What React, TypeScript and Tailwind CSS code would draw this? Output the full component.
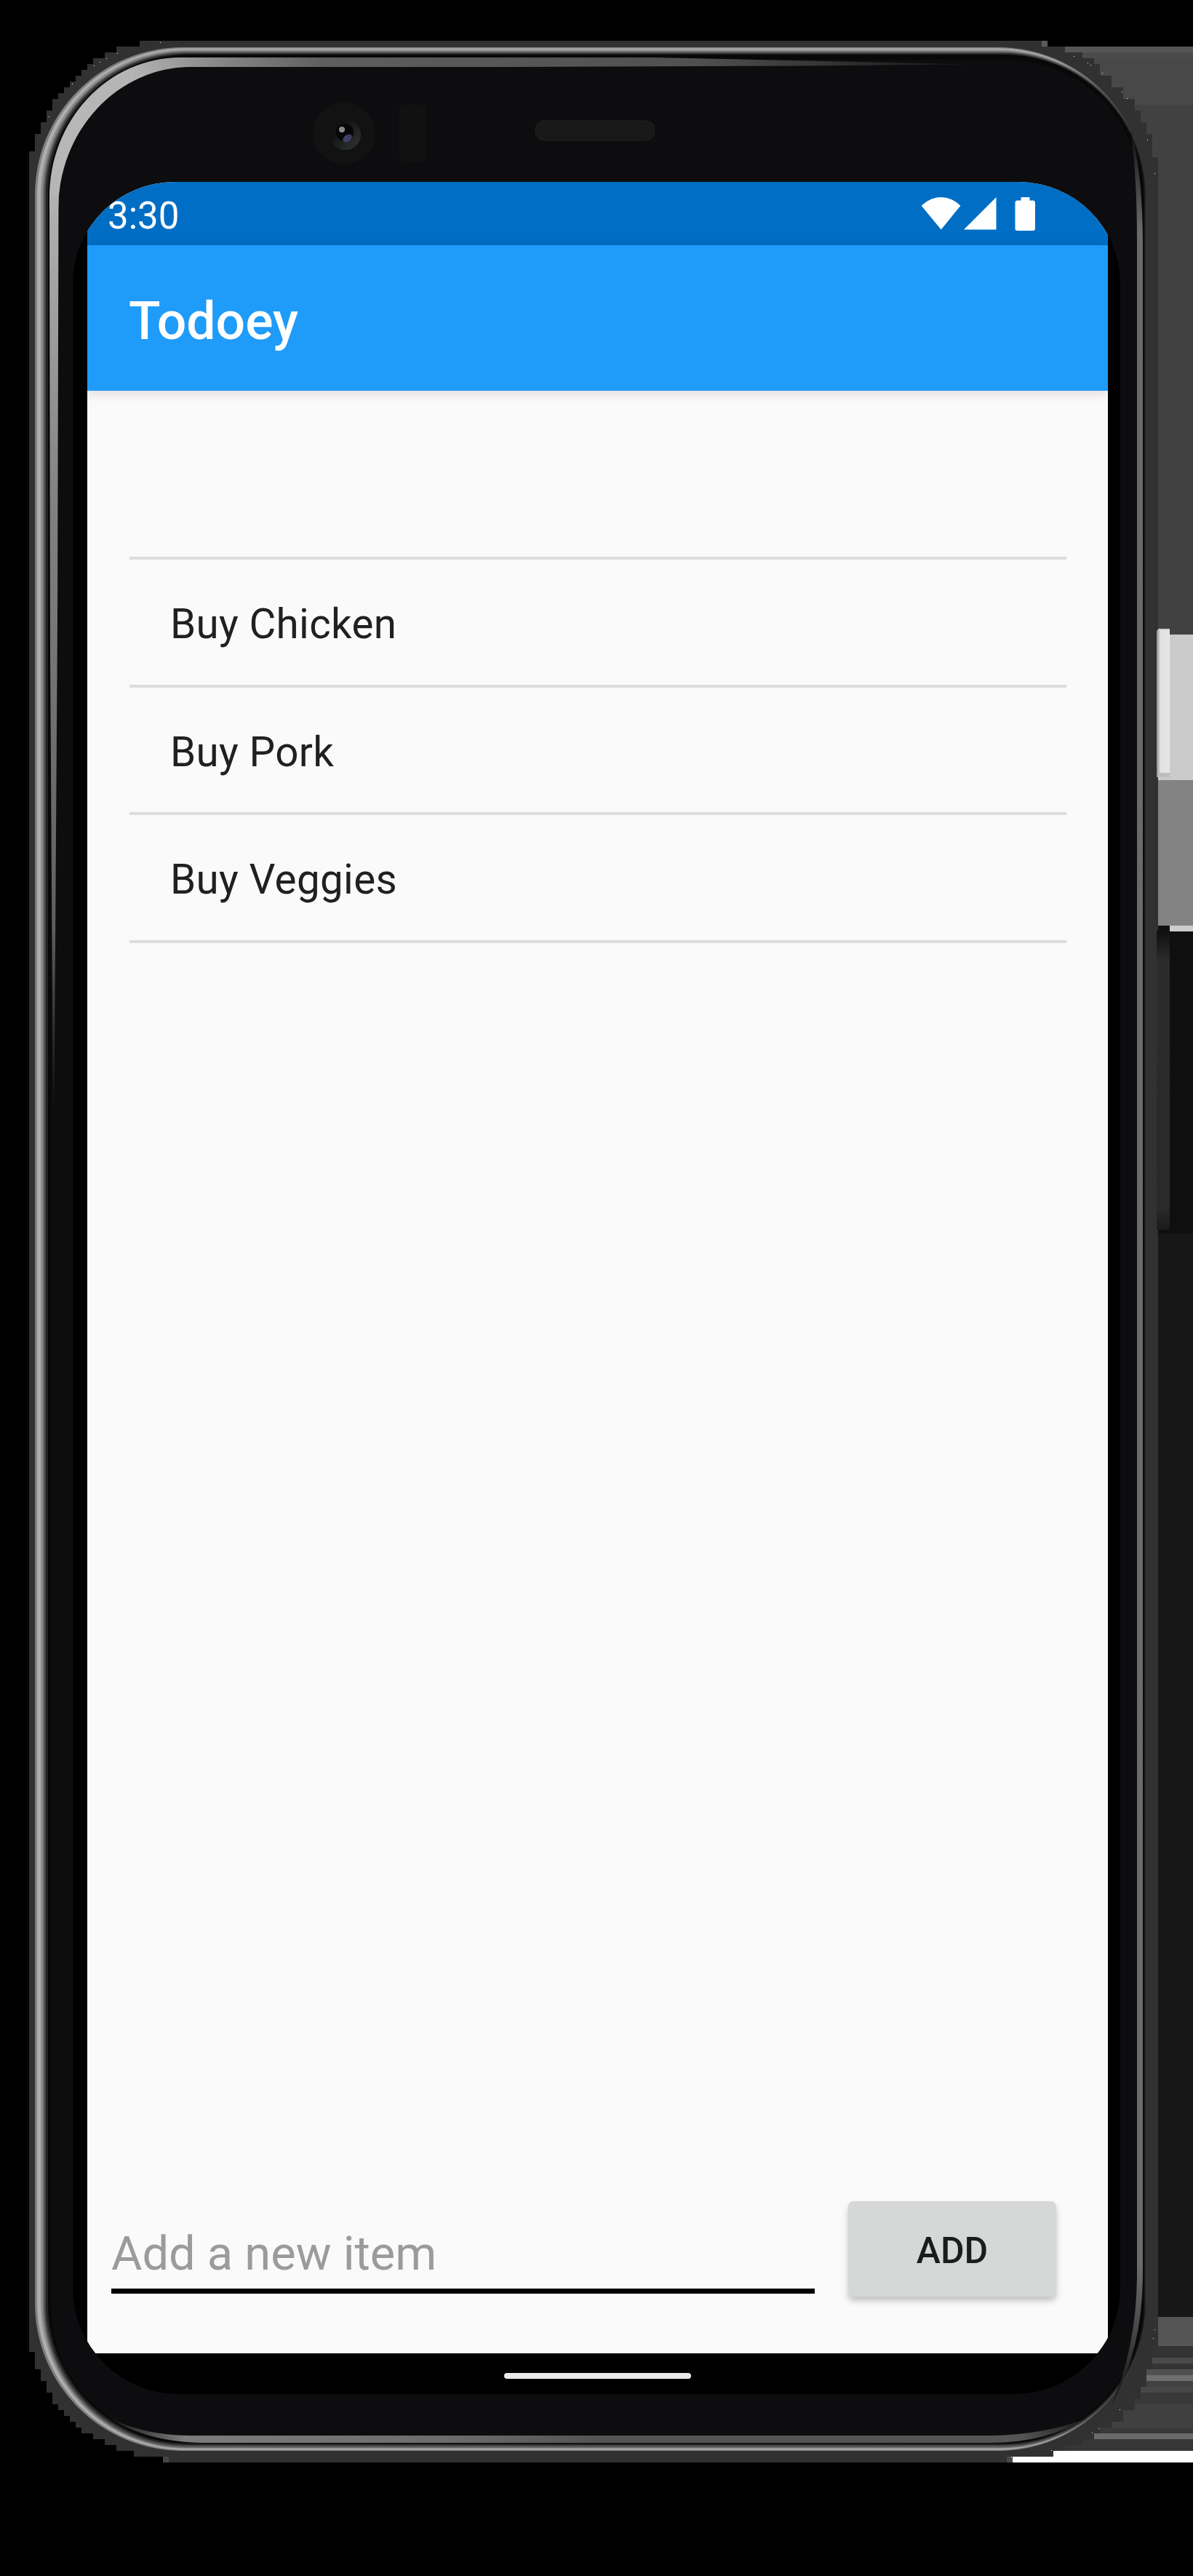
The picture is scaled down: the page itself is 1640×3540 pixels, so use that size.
import React, { useState } from "react";

type Step = [number, number];

/** Rounded rectangle outline from its four edges and corner radius. */
function shape(l: number, t: number, r: number, b: number, c: number) {
  return `M${l + c} ${t}H${r - c}A${c} ${c} 0 0 1 ${r} ${t + c}V${b - c}A${c} ${c} 0 0 1 ${r - c} ${b}H${l + c}A${c} ${c} 0 0 1 ${l} ${b - c}V${t + c}A${c} ${c} 0 0 1 ${l + c} ${t}Z`;
}

/** Each layer of the metal rim: left, top, right, bottom, radius, left colour, right colour. */
const rim: [number, number, number, number, number, string, string][] = [
  [48, 65, 1575, 3368, 203, "#808080", "#2a2a2a"],
  [51, 66.5, 1574.5, 3366.5, 202, "#aeaeae", "#242424"],
  [56, 68.5, 1574, 3365, 199, "#8d8d8d", "#1c1c1c"],
  [59, 70.5, 1573.5, 3364, 197, "#676767", "#161616"],
  [61, 72, 1573, 3362, 195, "#454545", "#101010"],
  [63, 73.5, 1572.5, 3360, 194, "#232323", "#0c0c0c"],
  [66, 75, 1572, 3358, 192, "#080808", "#080808"],
];

const topLeft: Step[] = [
  [40, 208], [48, 184], [56, 168], [64, 152], [72, 136], [80, 128], [88, 120], [96, 112],
  [104, 104], [112, 96], [120, 88], [128, 80], [144, 72], [160, 64], [192, 56],
];
const topRight: Step[] = [
  [1440, 64], [1464, 72], [1488, 80], [1504, 88], [1512, 104], [1528, 120], [1544, 136],
  [1560, 152], [1568, 168], [1576, 184], [1584, 216], [1592, 232],
];
const bottomRight: Step[] = [
  [1592, 3224], [1584, 3256], [1576, 3280], [1568, 3296], [1560, 3312], [1544, 3328],
  [1528, 3336], [1512, 3344], [1504, 3352], [1488, 3360], [1464, 3368], [1448, 3376], [1392, 3384],
];
const bottomLeft: Step[] = [
  [224, 3376], [184, 3368], [160, 3360], [144, 3352], [128, 3344], [112, 3336], [104, 3328],
  [96, 3320], [88, 3312], [80, 3304], [72, 3288], [64, 3272], [56, 3256], [48, 3232], [40, 3200],
];

/** Stair-stepped silhouette around the phone. */
const halo =
  "M40 208" +
  topLeft.map(([x, y]) => `H${x}V${y}`).join("") +
  topRight.map(([x, y]) => `H${x}V${y}`).join("") +
  bottomRight.map(([x, y]) => `H${x}V${y}`).join("") +
  bottomLeft.map(([x, y]) => `H${x}V${y}`).join("") +
  "Z";

/** Horizontal bands on the right edge: x, y, height, colour. */
const bands: [number, number, number, string][] = [
  [1440, 64, 8, "#555555"],
  [1440, 72, 8, "#4b4b4b"],
  [1440, 80, 64, "#484848"],
  [1500, 144, 728, "#414141"],
  [1592, 872, 200, "#cbcbcb"],
  [1592, 1072, 200, "#838383"],
  [1608, 1272, 8, "#cccccc"],
  [1592, 1280, 416, "#0f0f0f"],
  [1592, 1696, 1488, "#171717"],
  [1592, 3184, 40, "#555555"],
  [1576, 3224, 16, "#333333"],
  [1584, 3240, 8, "#4a4a4a"],
  [1560, 3248, 8, "#343434"],
  [1576, 3256, 8, "#515151"],
  [1576, 3264, 8, "#6e6e6e"],
  [1560, 3272, 8, "#414141"],
  [1568, 3280, 8, "#474747"],
  [1500, 3288, 16, "#393939"],
  [1500, 3304, 32, "#404040"],
  [1500, 3336, 8, "#393939"],
  [1504, 3344, 8, "#6a6a6a"],
  [1448, 3352, 16, "#363636"],
  [1392, 3368, 16, "#ffffff"],
];

const specks: Step[] = [
  [220, 58], [161, 73], [146, 80], [137, 85], [129, 90], [99, 115], [67, 160], [1476, 77], [1495, 86], [1499, 89],
  [1515, 100], [1542, 126], [1549, 135], [1577, 192], [1587, 238], [1587, 3201], [1585, 3213],
  [1539, 3311], [1510, 3337], [1501, 3343], [1445, 3367], [1390, 3376],
];

function DeviceArt() {
  return (
    <svg className="absolute inset-0" width="1640" height="3540" viewBox="0 0 1640 3540" aria-hidden="true">
      <defs>
        {rim.map(([, , , , , a, b], i) => (
          <linearGradient key={i} id={`rim${i}`} gradientUnits="userSpaceOnUse" x1="1450" y1="0" x2="1574" y2="0">
            <stop offset="0" stopColor={a} />
            <stop offset="1" stopColor={b} />
          </linearGradient>
        ))}
        <radialGradient id="shine" gradientUnits="userSpaceOnUse" cx="0" cy="0" r="1" gradientTransform="translate(80 180) scale(1260 1320)">
          <stop offset="0" stopColor="#b8b8b8" />
          <stop offset="0.1" stopColor="#b4b4b4" />
          <stop offset="0.2" stopColor="#828282" />
          <stop offset="0.3" stopColor="#5e5e5e" />
          <stop offset="0.7" stopColor="#505050" />
          <stop offset="1" stopColor="#141414" />
        </radialGradient>
        <linearGradient id="leftShine" gradientUnits="userSpaceOnUse" x1="0" y1="270" x2="0" y2="1520">
          <stop offset="0" stopColor="#b2b2b2" />
          <stop offset="0.35" stopColor="#808080" />
          <stop offset="0.8" stopColor="#606060" />
          <stop offset="1" stopColor="#101010" />
        </linearGradient>
        <linearGradient id="rightShine" gradientUnits="userSpaceOnUse" x1="0" y1="190" x2="0" y2="3300">
          <stop offset="0" stopColor="#151515" />
          <stop offset="0.04" stopColor="#6a6a6a" />
          <stop offset="0.94" stopColor="#6c6c6c" />
          <stop offset="0.97" stopColor="#454545" />
          <stop offset="1" stopColor="#111111" />
        </linearGradient>
        <linearGradient id="bottomShine" gradientUnits="userSpaceOnUse" x1="145" y1="0" x2="1500" y2="0">
          <stop offset="0" stopColor="#111111" />
          <stop offset="0.08" stopColor="#7c7c7c" />
          <stop offset="0.35" stopColor="#6c6c6c" />
          <stop offset="0.5" stopColor="#545454" />
          <stop offset="0.93" stopColor="#555555" />
          <stop offset="1" stopColor="#151515" />
        </linearGradient>
        <linearGradient id="power" x1="0" y1="0" x2="1" y2="0">
          <stop offset="0" stopColor="#8c8c8c" />
          <stop offset="0.12" stopColor="#b0b0b0" />
          <stop offset="0.3" stopColor="#e3e3e3" />
          <stop offset="1" stopColor="#e6e6e6" />
        </linearGradient>
        <linearGradient id="volume" x1="0" y1="0" x2="0" y2="1">
          <stop offset="0" stopColor="#101010" />
          <stop offset="0.1" stopColor="#2b2b2b" />
          <stop offset="0.93" stopColor="#2a2a2a" />
          <stop offset="1" stopColor="#1a1a1a" />
        </linearGradient>
        <linearGradient id="lens" x1="0.15" y1="0.15" x2="0.85" y2="0.85">
          <stop offset="0.2" stopColor="#121212" />
          <stop offset="0.6" stopColor="#1e2022" />
          <stop offset="1" stopColor="#2c2f2f" />
        </linearGradient>
        <pattern id="mesh" width="4" height="4" patternUnits="userSpaceOnUse">
          <rect width="4" height="4" fill="#111111" />
          <rect width="2" height="2" fill="#202020" />
          <rect x="2" y="2" width="2" height="2" fill="#202020" />
        </pattern>
      </defs>

      {bands.map(([x, y, h, fill]) => (
        <rect key={`${x}-${y}`} x={x} y={y} width={1640 - x} height={h} fill={fill} />
      ))}
      <path d={halo} fill="#313131" />
      <rect x="1432" y="56" width="8" height="8" fill="#5a5a5a" />
      <rect x="1384" y="3376" width="8" height="8" fill="#4a4a4a" />
      <rect x="224" y="3376" width="8" height="8" fill="#464646" />
      <rect x="1592" y="864" width="16" height="8" fill="#cfcfcf" />
      <rect x="1590" y="866" width="18" height="202" fill="url(#power)" />
      <rect x="1592" y="1062" width="16" height="6" fill="#bdbdbd" />
      <rect x="1592" y="1272" width="16" height="8" fill="#101010" />
      <rect x="1590" y="1279" width="18" height="411" fill="url(#volume)" />
      {specks.map(([x, y]) => (
        <rect key={`${x}-${y}`} x={x} y={y} width="1" height="1" fill="#ffffff" />
      ))}

      {rim.map(([l, t, r, b, c], i) => (
        <path key={i} d={shape(l, t, r, b, c)} fill={`url(#rim${i})`} />
      ))}
      <path d={shape(70, 82, 1568, 3354, 184)} fill="#0d0d0f" />
      <path
        d="M68 270A180 191 0 0 1 248 79H900L1340 88.5L1100 90.500L700 92H262A182 196 0 0 0 80 288V270Z"
        fill="url(#shine)"
      />
      <path d="M68 268H80.500L79 850L74.500 1520H73L69 900Z" fill="url(#leftShine)" />
      <path
        d="M1554 178Q1570 230 1571 330V3130Q1570 3230 1528 3305Q1562 3225 1563 3130V330Q1563 240 1554 178Z"
        fill="url(#rightShine)"
      />
      <path
        d="M149 3322Q195 3346 260 3347H1360Q1440 3346 1496 3322Q1440 3357 1360 3357H275Q200 3355 149 3322Z"
        fill="url(#bottomShine)"
      />

      <circle cx="473" cy="183" r="43" fill="#121212" />
      <circle cx="475" cy="185" r="21" fill="url(#lens)" />
      <circle cx="474" cy="182" r="12" fill="#060608" />
      <ellipse cx="477.500" cy="190" rx="7" ry="4.500" transform="rotate(-35 477.5 190)" fill="#3f3f62" />
      <circle cx="470" cy="178" r="4" fill="#8b8b8b" />
      <rect x="549" y="144" width="36" height="78" rx="6" fill="#111111" />
      <rect x="736" y="166" width="164" height="27" rx="12" fill="url(#mesh)" stroke="#202020" />
    </svg>
  );
}

function StatusIcons() {
  return (
    <svg className="mt-[20px] self-start" width="158" height="48" viewBox="1266 270 158 48" fill="#ffffff" aria-hidden="true">
      <path d="M1266.700 282.700Q1279 271 1293.700 271T1320.300 282.700L1293.700 315.500Z" />
      <path d="M1369.500 271V315.500H1325Z" />
      <path d="M1403.500 271H1415.500V275.500H1420Q1423 275.500 1423 278.500V314Q1423 317 1420 317H1398.500Q1395.500 317 1395.500 314V278.500Q1395.500 275.500 1398.500 275.500H1403.500Z" />
    </svg>
  );
}

function StatusBar() {
  return (
    <div className="flex h-[87px] shrink-0 items-center justify-between bg-[#006ec5] pl-[28px] pr-[99px]">
      <span className="pt-[5px] text-[51px] leading-none text-white">3:30</span>
      <StatusIcons />
    </div>
  );
}

function AppBar() {
  return (
    <header className="relative flex h-[200px] shrink-0 items-center bg-[#1f9bf9] pl-[57px] shadow-[0_3px_14px_rgba(60,30,10,0.16)]">
      <h1 className="pt-[9px] text-[71.5px] font-medium leading-none text-white">Todoey</h1>
    </header>
  );
}

export default function App() {
  const [items, setItems] = useState(["Buy Chicken", "Buy Pork", "Buy Veggies"]);
  const [draft, setDraft] = useState("");

  const add = () => {
    if (!draft.trim()) return;
    setItems([...items, draft.trim()]);
    setDraft("");
  };

  return (
    <div className="relative h-[3540px] w-[1640px] overflow-hidden bg-black pl-[100px] pt-[250px] font-[Roboto,sans-serif]">
      <DeviceArt />
      <div className="relative flex h-[3040px] w-[1440px] flex-col overflow-hidden rounded-b-[146px] rounded-t-[140px] bg-black pl-[20px] pr-[17px]">
        <div className="flex h-[2984px] shrink-0 flex-col bg-[#fafafa]">
          <StatusBar />
          <AppBar />
          <ul className="ml-[58px] mr-[57px] mt-[228px] border-t-4 border-[#dcdcdc]">
            {items.map((item, i) => (
              <li key={i} className="flex h-[175.500px] items-center border-b-4 border-[#dcdcdc] pl-[56px]">
                <span className="pt-[7px] text-[56.5px] leading-none tracking-[0.35px] text-[#202020]">{item}</span>
              </li>
            ))}
          </ul>
          <div className="mt-auto flex items-start gap-[46px] pb-[78px] pl-[33px]">
            <input
              className="h-[126.500px] w-[967px] border-b-[7px] border-black bg-transparent pt-[25px] text-[65px] text-[#202020] outline-none placeholder:text-[#9b9b9b]"
              placeholder="Add a new item"
              value={draft}
              onChange={(e) => setDraft(e.target.value)}
            />
            <button
              className="h-[131px] w-[286px] rounded-[7px] bg-[#d6d8d7] pt-[4px] text-[50px] font-medium leading-none text-[#1b1d1c] shadow-[0_6px_8px_rgba(0,0,0,0.22)]"
              onClick={add}
            >
              ADD
            </button>
          </div>
        </div>
        <div className="flex flex-1 justify-center pt-[27px]">
          <div className="h-[8px] w-[257px] rounded-full bg-[#ebebeb]" />
        </div>
      </div>
    </div>
  );
}
